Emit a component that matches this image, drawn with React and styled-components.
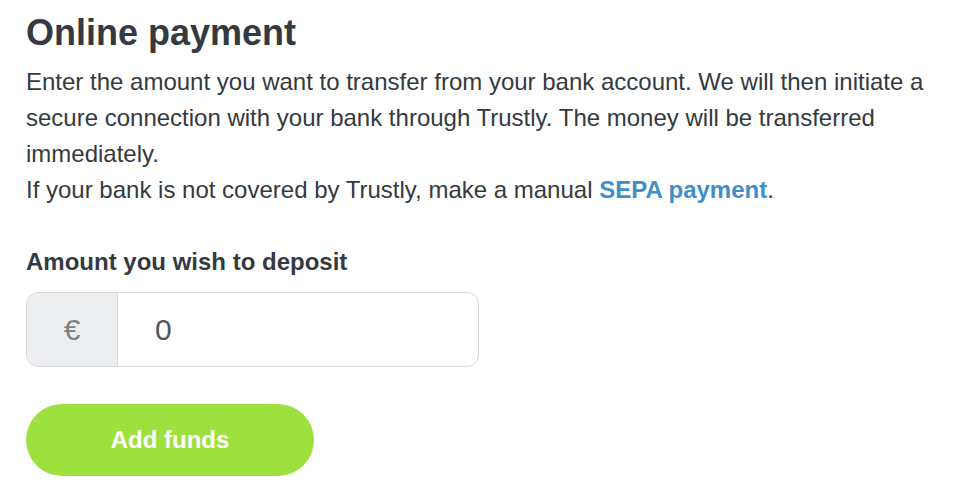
import React from "react";
import styled, { createGlobalStyle } from "styled-components";

const GlobalStyle = createGlobalStyle`
    body {
        margin: 0;
        background: #ffffff;
        font-family: "Liberation Sans", Arial, sans-serif;
        color: #343a40;
    }
`

export const Wrapper = styled.div`
    padding: 11px 26px 0 26px;
    box-sizing: border-box;
    width: 955px;
`
export const Title = styled.h1`
    margin: 0 0 10px 0;
    font-size: 36px;
    line-height: 43px;
    font-weight: 700;
    color: #343a40;
`
export const Text = styled.p`
    margin: 0 0 36px 0;
    font-size: 24px;
    line-height: 36px;
    color: #343a40;
    & a {
        color: #3f8fc8;
        font-weight: 700;
        text-decoration: none;
    }
`
export const Label = styled.label`
    display: block;
    font-size: 24px;
    line-height: 36px;
    font-weight: 700;
    color: #343a40;
    margin-bottom: 12px;
`
export const InputGroup = styled.div`
    display: flex;
    width: 453px;
    height: 75px;
    border: 1px solid #d5d7da;
    border-radius: 12px;
    overflow: hidden;
    box-sizing: border-box;
`
export const Prefix = styled.span`
    flex: 0 0 90px;
    display: flex;
    align-items: center;
    justify-content: center;
    background: #eceef0;
    border-right: 1px solid #d5d7da;
    color: #7b8289;
    font-size: 30px;
`
export const AmountInput = styled.input`
    flex: 1;
    border: none;
    outline: none;
    padding: 0 0 0 37px;
    font-family: "Liberation Sans", Arial, sans-serif;
    font-size: 30px;
    color: #50565c;
    background: transparent;
`
export const SubmitButton = styled.button`
    margin-top: 37px;
    width: 288px;
    height: 72px;
    border: none;
    border-radius: 36px;
    background: #9ee13f;
    color: #ffffff;
    font-family: "Liberation Sans", Arial, sans-serif;
    font-size: 24px;
    font-weight: 700;
    cursor: pointer;
`

const App = () => {
    return (
        <>
            <GlobalStyle />
            <Wrapper>
                <Title>Online payment</Title>
                <Text>
                    Enter the amount you want to transfer from your bank account. We will then initiate a secure connection with your bank through Trustly. The money will be transferred immediately.
                    <br />
                    If your bank is not covered by Trustly, make a manual <a href="#">SEPA payment</a>.
                </Text>
                <Label htmlFor="amount">Amount you wish to deposit</Label>
                <InputGroup>
                    <Prefix>€</Prefix>
                    <AmountInput id="amount" defaultValue="0" />
                </InputGroup>
                <SubmitButton>Add funds</SubmitButton>
            </Wrapper>
        </>
    )
}

export default App;
